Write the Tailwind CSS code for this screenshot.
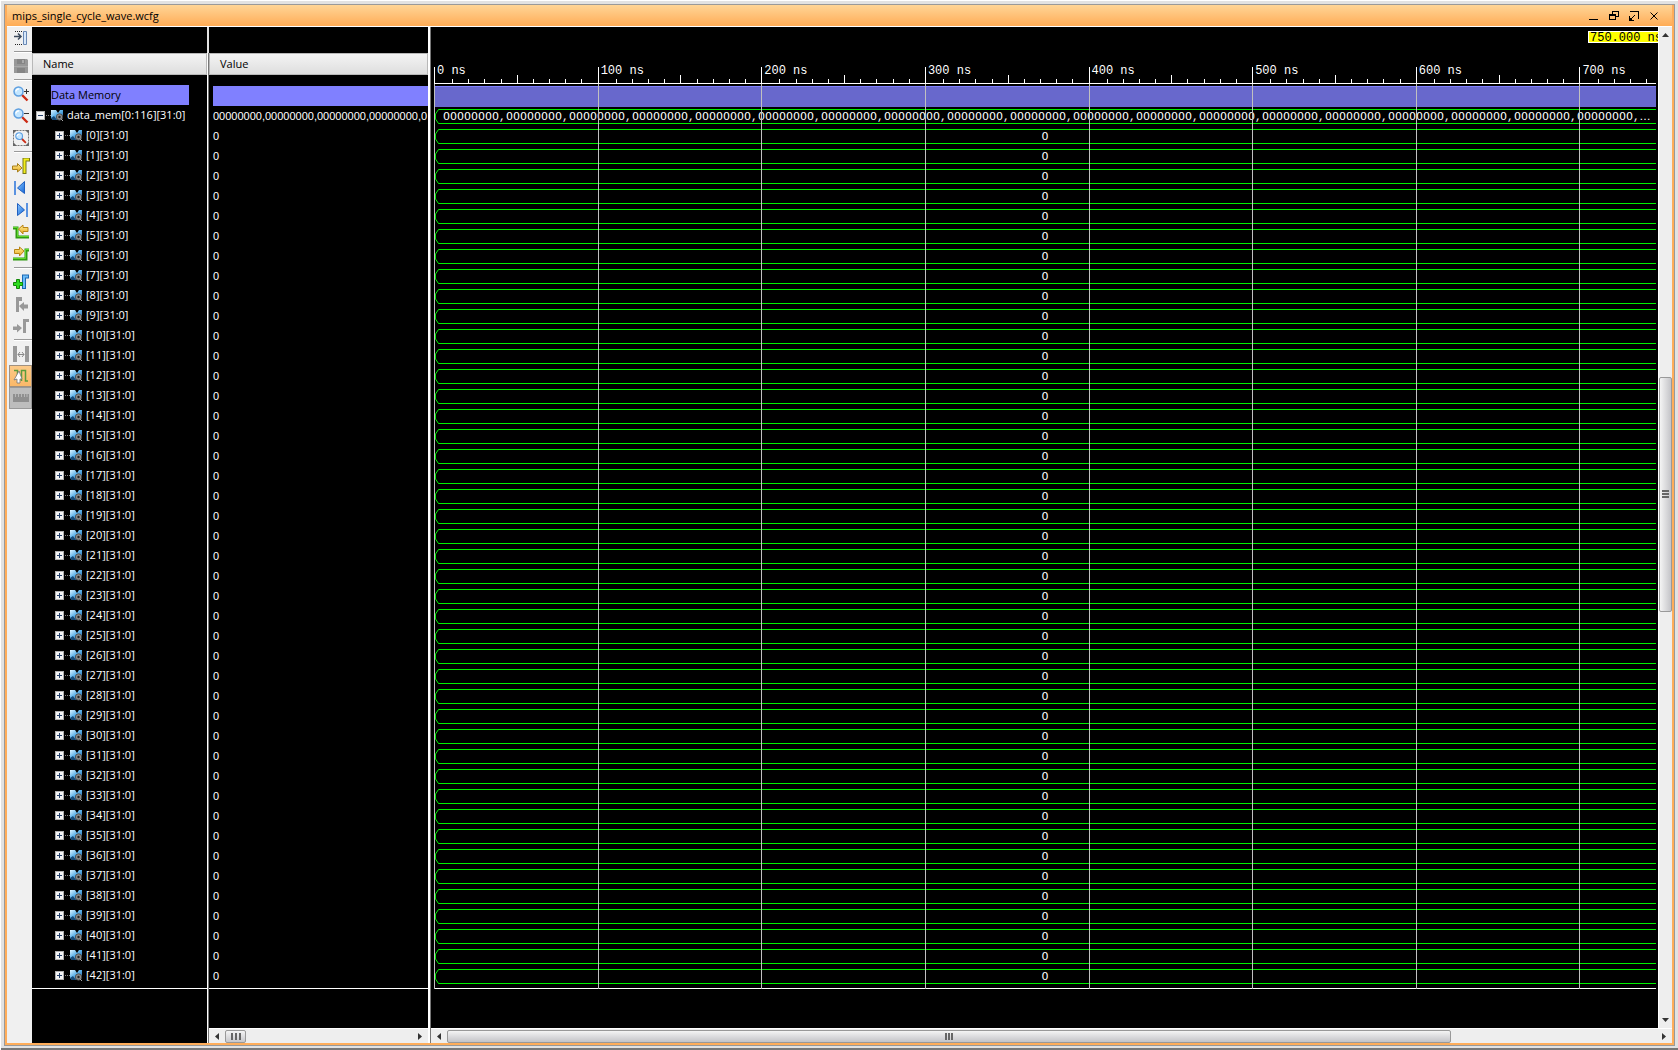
<!DOCTYPE html>
<html lang="en">
<head>
<meta charset="utf-8">
<title>mips_single_cycle_wave.wcfg</title>
<script src="https://cdn.jsdelivr.net/npm/@tailwindcss/browser@4"></script>
</head>
<body class="h-screen overflow-hidden bg-[#e2e2e2] font-['Open_Sans',sans-serif] text-[11px] text-black">
<svg class="absolute h-0 w-0" aria-hidden="true">
  <defs>
    <linearGradient id="sig" x1="0" y1="0" x2="1" y2="1"><stop offset="0" stop-color="#e0f4ff"/><stop offset=".45" stop-color="#5fb4ec"/><stop offset="1" stop-color="#1c5a94"/></linearGradient>
    <linearGradient id="blue" x1="0" y1="0" x2="1" y2="1"><stop offset="0" stop-color="#8cc8ff"/><stop offset="1" stop-color="#1467d8"/></linearGradient>
    <linearGradient id="gold" x1="0" y1="0" x2="0" y2="1"><stop offset="0" stop-color="#fff09a"/><stop offset="1" stop-color="#e8a81c"/></linearGradient>
    <symbol id="bus" viewBox="0 0 12 12">
      <path d="M0 1h5l2 3 2-3h3v5l-5 5H2L0 9z" fill="url(#sig)"/>
      <path d="M0 9l3-2 3 4H2z" fill="#174a78"/>
      <circle cx="8.500" cy="8" r="3.200" fill="#8b8b8b" stroke="#444" stroke-width=".8"/>
      <circle cx="8.500" cy="8" r="1.200" fill="#222"/><path d="M10 10l2 2" stroke="#aaa"/>
    </symbol>
    <symbol id="lens" viewBox="0 0 16 16">
      <path d="M9 9l5.500 5.500" stroke="#cc2a14" stroke-width="2.400"/>
      <circle cx="5.500" cy="5.500" r="4.500" fill="#c4e6ff" stroke="#5e9fe0" stroke-width="1.500"/>
      <path d="M3 5.500a2.500 2.500 0 0 1 3-2.500" stroke="#fff" stroke-width="1.500" fill="none"/>
    </symbol>
  </defs>
</svg>
<div class="h-full border-t border-l border-[#fff] pt-[3px] pl-[3px] pr-[3px] pb-[4px] shadow-[inset_0_-2px_0_#777]">
<main class="flex h-full flex-col border border-[#999]">
 <div class="flex min-h-0 flex-1 flex-col border-2 border-t-0 border-[#ffad5a]">
  <header class="flex h-[22px] flex-none items-center border-b border-white bg-linear-to-b from-[#ffd596] to-[#ffac55] pl-[5px] pr-[8px]">
    <h1 class="flex-1 leading-[20px]">mips_single_cycle_wave.wcfg</h1>
    <button aria-label="Minimize" class="flex w-[20px] justify-center"><svg width="10" height="12" shape-rendering="crispEdges"><path d="M0 9h9v1H0z"/></svg></button>
    <button aria-label="Restore" class="flex w-[20px] justify-center"><svg width="12" height="12" fill="none" stroke="#000" shape-rendering="crispEdges"><path d="M1.500 4.500h6v5h-6zM4.500 4V1.500h6v5H8M1 5.500h7"/></svg></button>
    <button aria-label="Float" class="flex w-[20px] justify-center"><svg width="12" height="12" fill="none" stroke="#000" shape-rendering="crispEdges"><path d="M2 1.500h8.500V9M1.500 6v4.500H6M2 10l5-5"/><path d="M1 7l4 4H1z" fill="#000" stroke="none"/></svg></button>
    <button aria-label="Close" class="flex w-[20px] justify-center"><svg width="10" height="12" stroke="#000"><path d="M1.500 2.500l7 7M8.500 2.500l-7 7"/></svg></button>
  </header>
  <div class="flex min-h-0 flex-1">
    <nav id="tools" aria-label="Wave tools" class="flex w-[25px] flex-none flex-col items-stretch bg-[#f0f0f0] pl-[2px]">
      <button aria-label="Show panel" class="flex h-[22px] items-center justify-center"><svg width="16" height="16" fill="none"><path d="M2 1.500h8M2 14.500h8" stroke="#222" stroke-dasharray="1 1"/><path d="M1 6.500h6M5 3.500l3 3-3 3" stroke="#3c4a5c" stroke-width="1.500"/><path d="M10.500 1.500h3v13h-3z" fill="#d8e8fa" stroke="#6888b4"/></svg></button>
      <hr class="my-[2px] ml-[5px] h-[2px] border-0 border-t border-b border-t-[#999] border-b-white">
      <button aria-label="Save" class="flex h-[22px] items-center justify-center"><svg width="16" height="16"><path d="M1 1h13l1 1v13H1z" fill="#989898"/><path d="M4 1h8v5H4zM4 10h8v5H4z" fill="#858585"/><path d="M9 2h2v3H9zM1 8h14v1H1z" fill="#aaa"/></svg></button>
      <hr class="my-[2px] ml-[5px] h-[2px] border-0 border-t border-b border-t-[#999] border-b-white">
      <button aria-label="Zoom in" class="flex h-[22px] items-center justify-center"><svg width="16" height="16"><use href="#lens"/><path d="M11 5.500h5M13.500 3v5" stroke="#333"/></svg></button>
      <button aria-label="Zoom out" class="flex h-[22px] items-center justify-center"><svg width="16" height="16"><use href="#lens"/><path d="M11 5.500h5" stroke="#333"/></svg></button>
      <button aria-label="Zoom to fit" class="flex h-[22px] items-center justify-center"><svg width="16" height="16"><path d="M.5.5h15v15H.5z" fill="none" stroke="#777" stroke-dasharray="2 1"/><path d="M0 0h4L0 4zM16 0v4l-4-4zM0 16v-4l4 4zM16 16h-4l4-4z" fill="#666"/><use href="#lens" x="2" y="2" width="12" height="12"/></svg></button>
      <hr class="my-[2px] ml-[5px] h-[2px] border-0 border-t border-b border-t-[#999] border-b-white">
      <button aria-label="Go to cursor" class="flex h-[22px] items-center justify-center"><svg width="18" height="16"><path d="M.5 8h5V5.500L10 10l-4.500 4V11.500h-5z" fill="url(#gold)" stroke="#a8801c"/><path d="M12.500 16V1.500H18" fill="none" stroke="#77771a" stroke-width="4"/><path d="M12.500 15V1.500H17" fill="none" stroke="#f2ee1a" stroke-width="2"/></svg></button>
      <button aria-label="Previous transition" class="flex h-[22px] items-center justify-center"><svg width="16" height="16"><path d="M1 1h2v14H1z" fill="#5a92e0"/><path d="M11.500 1.500v12L4.500 8z" fill="url(#blue)" stroke="#2060c0"/></svg></button>
      <button aria-label="Next transition" class="flex h-[22px] items-center justify-center"><svg width="16" height="16"><path d="M13 1h2v14h-2z" fill="#5a92e0"/><path d="M4.500 1.500v12l7-5.500z" fill="url(#blue)" stroke="#2060c0"/></svg></button>
      <button aria-label="Previous edge" class="flex h-[22px] items-center justify-center"><svg width="16" height="16"><path d="M0 4h4v9h12" fill="none" stroke="#2f9a10" stroke-width="3"/><path d="M0 3.500h4.500v9H16" fill="none" stroke="#60d82c"/><path d="M5.500 5L10 1v2.500h5v4h-5V10z" fill="url(#gold)" stroke="#b88414"/></svg></button>
      <button aria-label="Next edge" class="flex h-[22px] items-center justify-center"><svg width="16" height="16"><path d="M0 13h13V4h3" fill="none" stroke="#2f9a10" stroke-width="3"/><path d="M0 12.500h12.500v-9H16" fill="none" stroke="#60d82c"/><path d="M11 5L6.500 1v2.500h-5v4h5V10z" fill="url(#gold)" stroke="#b88414"/></svg></button>
      <hr class="my-[2px] ml-[5px] h-[2px] border-0 border-t border-b border-t-[#999] border-b-white">
      <button aria-label="Add marker" class="flex h-[22px] items-center justify-center"><svg width="16" height="16"><path d="M11 15V2.500h5" fill="none" stroke="#1c68b4" stroke-width="4"/><path d="M11 14V2.500h4" fill="none" stroke="#6cbcf8" stroke-width="2"/><path d="M3.500 5.500h3v3h3v3h-3v3h-3v-3h-3v-3h3z" fill="#2fdc20" stroke="#128808"/></svg></button>
      <button aria-label="Previous marker" class="flex h-[22px] items-center justify-center"><svg width="16" height="16" fill="#999"><path d="M3 1h6v4H6v11H3zM6 10l5-4v2.500h4v4h-4V15z"/></svg></button>
      <button aria-label="Next marker" class="flex h-[22px] items-center justify-center"><svg width="16" height="16" fill="#999"><path d="M10 1h6v3h-3v11h-3zM0 8.500h4V6l5 4-5 4.500v-2.500H0z"/></svg></button>
      <hr class="my-[2px] ml-[5px] h-[2px] border-0 border-t border-b border-t-[#999] border-b-white">
      <button aria-label="Swap cursors" class="flex h-[22px] items-center justify-center"><svg width="16" height="16" fill="#999"><path d="M0 0h4v16H0zM12 0h4v16h-4z"/><path d="M5 8.500h6M7 6L5 8.500 7 11M9 6l2 2.500L9 11" stroke="#888" fill="none"/></svg></button>
      <button aria-label="Snap to transition" aria-pressed="true" class="flex h-[22px] items-center justify-center border border-[#a09080] bg-linear-to-b from-[#fcca88] to-[#fbb868]"><svg width="16" height="16"><path d="M1 2.500h3.500V10M8.500 13V2.500h4V13H15" fill="none" stroke="#5c9c3c" stroke-width="1.500"/><path d="M6 3L1 12l3-1v4h3v-4h2z" fill="#fff" stroke="#777" stroke-width=".8"/></svg></button>
      <button aria-label="Floating ruler" class="flex h-[22px] items-center justify-center border border-[#999] bg-[#bdbdbd]"><svg width="16" height="16"><path d="M0 4h16v8H0z" fill="#8f8f8f"/><path d="M2.500 4v3M5.500 4v3M8.500 4v3M11.500 4v3M14 4v3" stroke="#b8b8b8"/></svg></button>
    </nav>

    <section aria-label="Names" class="flex w-[175px] flex-none flex-col bg-black pt-[26px] text-white">
      <h2 class="h-[22px] flex-none border border-[#b8b8b8] bg-linear-to-b from-[#f4f4f4] to-[#dedede] pl-[10px] leading-[20px] text-black">Name</h2>
      <div class="mt-[10px] mr-[18px] ml-[19px] h-[20px] flex-none bg-[#8080ff] leading-[20px] text-black">Data Memory</div>
      <div class="flex h-[20px] flex-none items-center pl-[4px]">
        <button aria-label="Collapse data_mem" class="flex-none"><svg class="block" width="9" height="9" shape-rendering="crispEdges"><path d="M0 0h9v9H0z" fill="#b0b0b0"/><path d="M1 1h7v7H1z" fill="#f4f4f4"/><path d="M2 4h5v1H2z" fill="#24406c"/></svg></button>
        <span class="ml-[1px] w-[5px] flex-none border-t border-dotted border-[#888]"></span>
        <svg class="flex-none" width="12" height="12"><use href="#bus"/></svg>
        <span class="ml-[4px]">data_mem[0:116][31:0]</span>
      </div>
      <div id="names"></div>
      <div class="mt-[3px] h-px flex-none bg-white"></div>
    </section>
    <div class="mt-[26px] w-[2px] flex-none border-r border-[#777] bg-white"></div>

    <section aria-label="Values" class="flex w-[219px] flex-none flex-col bg-black pt-[26px] text-white">
      <h2 class="h-[22px] flex-none border border-[#b8b8b8] bg-linear-to-b from-[#f4f4f4] to-[#dedede] pl-[10px] leading-[20px] text-black">Value</h2>
      <div class="mt-[11px] ml-[4px] h-[20px] flex-none bg-[#8080ff]"></div>
      <div class="h-[20px] flex-none overflow-hidden pl-[4px] font-['Liberation_Sans',sans-serif] leading-[20px] whitespace-nowrap">00000000,00000000,00000000,00000000,0</div>
      <div id="values" class="font-['Liberation_Sans',sans-serif]"></div>
      <div class="mt-[2px] h-px flex-none bg-white"></div>
      <div class="flex-1"></div>
      <div class="flex h-[15px] flex-none items-center border-t border-white bg-[#eee]">
        <button aria-label="Scroll left" class="flex w-[16px] justify-center"><svg width="4" height="7" fill="#333"><path d="M4 0v7L0 3.500z"/></svg></button>
        <div class="flex h-[13px] w-[21px] items-center justify-center gap-[2px] rounded-xs border border-[#999] bg-linear-to-b from-[#f4f4f4] to-[#c8c8cc]"><i class="h-[7px] w-[2px] bg-[#666]"></i><i class="h-[7px] w-[2px] bg-[#666]"></i><i class="h-[7px] w-[2px] bg-[#666]"></i></div>
        <button aria-label="Scroll right" class="ml-auto flex w-[16px] justify-center"><svg width="4" height="7" fill="#333"><path d="M0 0v7l4-3.500z"/></svg></button>
      </div>
    </section>
    <div class="w-[3px] flex-none border-r border-[#777] bg-white"></div>

    <section aria-label="Waveform" class="flex min-w-0 flex-1 flex-col">
      <div class="flex min-h-0 flex-1">
        <div class="min-w-0 flex-1 bg-black pt-[4px] font-['DejaVu_Sans',sans-serif] text-[11px] text-white">
          <div class="ml-auto h-[12px] w-[70px] overflow-x-clip border border-r-0 border-white bg-[#ff0] pl-px font-['Liberation_Mono',monospace] text-[12px] leading-[12px] whitespace-nowrap text-black">750.000 ns</div>
          <div class="relative mt-[20px] mr-[2px] ml-[3px] overflow-hidden">
            <div id="ruler" class="flex h-[21px] border-b border-white font-['Liberation_Mono',monospace] text-[12px]"></div>
            <div class="mt-[2px] h-[21px] border-t border-[#8080ff] bg-[#6868cc]"></div>
            <div id="waves" class="pt-px"></div>
            <div class="h-px bg-white"></div>
            <div id="grid" class="pointer-events-none absolute inset-x-0 top-[21px] bottom-0 flex"></div>
          </div>
        </div>
        <div class="flex w-[14px] flex-none flex-col items-stretch border-l border-white bg-[#eee]">
          <button aria-label="Scroll up" class="flex h-[16px] items-center justify-center"><svg width="7" height="4" fill="#333"><path d="M0 4h7L3.500 0z"/></svg></button>
          <div class="flex-[344]"></div>
          <div class="flex flex-[240] flex-col items-center justify-center gap-px rounded-xs border border-[#999] bg-linear-to-r from-[#f4f4f4] to-[#c4c4c8]"><i class="h-[2px] w-[7px] bg-[#666]"></i><i class="h-[2px] w-[7px] bg-[#666]"></i><i class="h-[2px] w-[7px] bg-[#666]"></i></div>
          <div class="flex-[412]"></div>
          <button aria-label="Scroll down" class="flex h-[16px] items-center justify-center"><svg width="7" height="4" fill="#333"><path d="M0 0h7L3.500 4z"/></svg></button>
        </div>
      </div>
      <div class="flex h-[15px] flex-none items-center border-t border-white bg-[#eee]">
        <button aria-label="Scroll left" class="flex w-[16px] justify-center"><svg width="4" height="7" fill="#333"><path d="M4 0v7L0 3.500z"/></svg></button>
        <div class="flex h-[13px] flex-[83] items-center justify-center gap-px rounded-xs border border-[#999] bg-linear-to-b from-[#f4f4f4] to-[#c4c4c8]"><i class="h-[7px] w-[2px] bg-[#666]"></i><i class="h-[7px] w-[2px] bg-[#666]"></i><i class="h-[7px] w-[2px] bg-[#666]"></i></div>
        <div class="flex-[17]"></div>
        <button aria-label="Scroll right" class="flex w-[16px] justify-center"><svg width="4" height="7" fill="#333"><path d="M0 0v7l4-3.500z"/></svg></button>
      </div>
    </section>
  </div>
 </div>
</main>
</div>
<script>
const put = (id, html) => document.getElementById(id).innerHTML = html;
const list = (n, f) => Array.from({length: n}, (_, i) => f(i)).join('');

put('names', list(43, i => `<div class="flex h-[20px] items-center pl-[23px]">
  <button aria-label="Expand [${i}]" class="flex-none"><svg class="block" width="9" height="9" shape-rendering="crispEdges"><path d="M0 0h9v9H0z" fill="#b0b0b0"/><path d="M1 1h7v7H1z" fill="#f4f4f4"/><path d="M2 4h5v1H2zM4 2h1v5H4z" fill="#24406c"/></svg></button>
  <span class="ml-[1px] w-[5px] flex-none border-t border-dotted border-[#888]"></span>
  <svg class="flex-none" width="12" height="12"><use href="#bus"/></svg>
  <span class="ml-[4px]">[${i}][31:0]</span></div>`));

put('values', list(43, () => '<div class="h-[20px] pl-[4px] leading-[20px]">0</div>'));

// One bus lane: angled opening at time zero, then two rails across the view
const lane = inner => `<div class="flex h-[20px] items-start pt-px"><svg class="flex-none" width="5" height="15" fill="none" stroke="#00f000"><path d="M5 .5H4.500L1.500 5v5l3 4.500H5"/></svg><div class="flex h-[15px] min-w-0 flex-1 overflow-hidden border-y border-[#00f000] leading-[13px]">${inner}</div></div>`;
put('waves',
  lane('<div class="flex pl-[4px]">' + list(19, i => `<span class="w-[63px] flex-none whitespace-nowrap">00000000<span class="font-['Liberation_Mono',monospace]">,</span>${i < 18 ? '' : '…'}</span>`) + '</div>') +
  list(43, () => lane('<span class="w-full pr-[5px] text-center">0</span>')));

put('ruler', list(8, i => `<div class="flex w-[13.39%] flex-none items-end"><i class="h-[16px] w-0 border-l border-white"></i><div class="w-0 self-start overflow-visible pt-[2px] pl-[2px] leading-[13px] whitespace-nowrap">${i * 100} ns</div>` +
  list(10, k => `<i class="flex-1 ${k === 4 ? 'h-[8px] border-r' : k < 9 ? 'h-[4px] border-r' : 'h-[4px]'} border-white"></i>`) + '</div>'));
put('grid', list(8, () => '<div class="w-[13.39%] flex-none border-l border-[#c0c0c0]"></div>'));
</script>
</body>
</html>
